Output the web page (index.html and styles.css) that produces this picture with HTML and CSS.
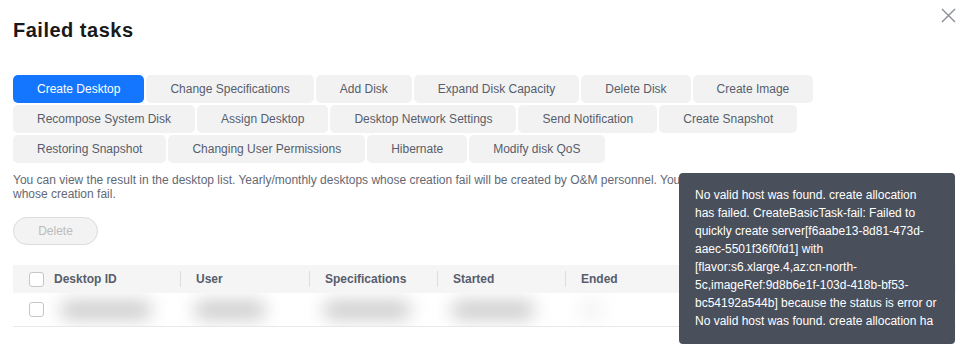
FILE: index.html
```html
<!DOCTYPE html>
<html lang="en">
<head>
    <meta charset="UTF-8">
    <meta name="viewport" content="width=device-width, initial-scale=1.0">
    <title>Failed tasks</title>
    <link rel="stylesheet" href="styles.css">
</head>
<body>

<div class="dialog">
    <!-- Close button -->
    <button class="close" title="Close">
        <svg width="15" height="15" viewBox="0 0 15 15"><path d="M1 1L14 14M14 1L1 14" stroke="#8a8e99" stroke-width="1.4" fill="none"/></svg>
    </button>

    <h2 class="title">Failed tasks</h2>

    <!-- Task type tabs -->
    <div class="tabs">
        <button class="tab active">Create Desktop</button>
        <button class="tab">Change Specifications</button>
        <button class="tab">Add Disk</button>
        <button class="tab">Expand Disk Capacity</button>
        <button class="tab">Delete Disk</button>
        <button class="tab">Create Image</button>
        <button class="tab">Recompose System Disk</button>
        <button class="tab">Assign Desktop</button>
        <button class="tab">Desktop Network Settings</button>
        <button class="tab">Send Notification</button>
        <button class="tab">Create Snapshot</button>
        <button class="tab">Restoring Snapshot</button>
        <button class="tab">Changing User Permissions</button>
        <button class="tab">Hibernate</button>
        <button class="tab">Modify disk QoS</button>
    </div>

    <p class="tip">You can view the result in the desktop list. Yearly/monthly desktops whose creation fail will be created by O&amp;M personnel. You can delete the pay-per-use desktops and desktops whose creation fail.</p>

    <div class="toolbar">
        <button class="btn-delete" disabled>Delete</button>
    </div>

    <!-- Failed task list -->
    <table class="grid">
        <colgroup>
            <col style="width: 167px">
            <col style="width: 129px">
            <col style="width: 128px">
            <col style="width: 128px">
            <col style="width: 128px">
            <col>
        </colgroup>
        <thead>
            <tr>
                <th><span class="check"></span>Desktop ID</th>
                <th>User</th>
                <th>Specifications</th>
                <th>Started</th>
                <th>Ended</th>
                <th></th>
            </tr>
        </thead>
        <tbody>
            <tr>
                <td><span class="check"></span><span class="blur" style="width: 92px"></span></td>
                <td><span class="blur" style="width: 72px"></span></td>
                <td><span class="blur" style="width: 88px"></span></td>
                <td><span class="blur" style="width: 84px"></span></td>
                <td><span class="blur faint" style="width: 24px"></span></td>
                <td></td>
            </tr>
        </tbody>
    </table>

    <!-- Hover tooltip for failure cause -->
    <div class="tooltip">
        <div class="tooltip-body">No valid host was found. create allocation has failed. CreateBasicTask-fail: Failed to quickly create server[f6aabe13-8d81-473d-aaec-5501f36f0fd1] with [flavor:s6.xlarge.4,az:cn-north-5c,imageRef:9d8b6e1f-103d-418b-bf53-bc54192a544b] because the status is error or No valid host was found. create allocation ha</div>
    </div>
</div>

</body>
</html>
```

FILE: styles.css
```css
body {
    margin: 0;
    font-family: "Liberation Sans", Arial, sans-serif;
    font-size: 12px;
    color: #575d6c;
    background: #ffffff;
}
.dialog {
    position: relative;
    padding: 0 13px;
    height: 359px;
    overflow: hidden;
}
.close {
    position: absolute;
    top: 8px;
    right: 13px;
    width: 15px;
    height: 15px;
    padding: 0;
    border: none;
    background: none;
    cursor: pointer;
}
.close svg {
    display: block;
}
.title {
    margin: 16px 0 0;
    font-size: 20px;
    line-height: 28px;
    letter-spacing: 0.5px;
    font-weight: bold;
    color: #191919;
}
.tabs {
    display: flex;
    flex-wrap: wrap;
    gap: 2px;
    max-width: 880px;
    margin-top: 31px;
}
.tab {
    height: 28px;
    padding: 0 24px;
    border: none;
    border-radius: 5px;
    background: #f2f2f2;
    color: #575d6c;
    font-family: inherit;
    font-size: 12px;
    cursor: pointer;
}
.tab.active {
    background: #1476ff;
    color: #ffffff;
}
.tip {
    margin: 10px 0 0;
    line-height: 14px;
    color: #646873;
}
.toolbar {
    margin-top: 16px;
}
.btn-delete {
    width: 85px;
    height: 28px;
    border: 1px solid #dcdcdc;
    border-radius: 14px;
    background: #f3f3f3;
    color: #bcbcbc;
    font-family: inherit;
    font-size: 12px;
}
.grid {
    width: 943px;
    margin-top: 20px;
    border-collapse: collapse;
    table-layout: fixed;
}
.grid th {
    position: relative;
    height: 28px;
    padding: 0 16px;
    background: #f5f5f5;
    text-align: left;
    font-weight: bold;
    color: #575d6c;
    white-space: nowrap;
}
.grid th + th::before {
    content: "";
    position: absolute;
    left: 0;
    top: 6px;
    height: 16px;
    border-left: 1px solid #dcdde0;
}
.grid td {
    height: 33px;
    padding: 0 14px;
    border-bottom: 1px solid #e8e8e8;
    white-space: nowrap;
    overflow: hidden;
}
.grid td:first-child {
    padding-left: 16px;
}
.grid td:first-child .blur {
    margin-left: 16px;
}
.check {
    display: inline-block;
    width: 13px;
    height: 13px;
    margin-right: 10px;
    border: 1px solid #c4c6cc;
    border-radius: 3px;
    background: #ffffff;
    vertical-align: -4px;
}
.grid td .check {
    margin-right: 0;
}
.blur {
    display: inline-block;
    height: 18px;
    border-radius: 9px;
    background: #c9c9c9;
    filter: blur(9px);
    vertical-align: middle;
}
.blur.faint {
    background: #f0f0f0;
}
.tooltip {
    position: absolute;
    left: 679px;
    top: 173px;
    width: 242px;
    padding: 13px 18px 14px 16px;
    border-radius: 4px;
    background: #4a4f5c;
    color: #ffffff;
    line-height: 18px;
}
```
